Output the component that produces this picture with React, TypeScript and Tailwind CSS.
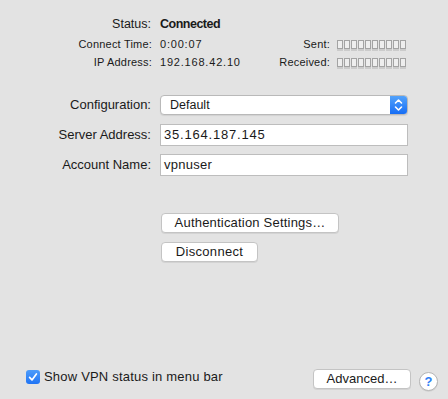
import React from "react";

function Tofu() {
  return (
    <div className="flex items-center gap-[1px] h-[18px]">
      {Array.from({ length: 10 }).map((_, i) => (
        <span
          key={i}
          className="block w-[6px] h-[9px] border border-[#a3a3a3] bg-[#eeeeee] shadow-[0_2px_0_#cbcbcb]"
        />
      ))}
    </div>
  );
}

export default function App() {
  return (
    <div className="w-[448px] h-[399px] bg-[#e3e3e3] flex flex-col text-[#1a1a1a] overflow-hidden font-['Liberation_Sans',Arial,sans-serif]">
      {/* Status section */}
      <div className="pt-[15px]">
        <div className="flex h-[18px] items-center text-[12.5px]">
          <div className="w-[151px] text-right">Status:</div>
          <div className="ml-[9px] font-bold tracking-[-0.5px]">Connected</div>
        </div>
        <div className="mt-[2px] flex">
          <div className="grid grid-cols-[152px_auto] gap-x-2 text-[11px] leading-[18px]">
            <div className="text-right tracking-[0.2px]">Connect Time:</div>
            <div className="tracking-[0.8px]">0:00:07</div>
            <div className="text-right tracking-[0.2px]">IP Address:</div>
            <div className="tracking-[0.8px]">192.168.42.10</div>
          </div>
          <div className="ml-auto mr-[42px] grid grid-cols-[auto_auto] gap-x-[7px] text-[11px] leading-[18px]">
            <div className="text-right tracking-[0.2px]">Sent:</div>
            <Tofu />
            <div className="text-right tracking-[0.2px]">Received:</div>
            <Tofu />
          </div>
        </div>
      </div>

      {/* Form */}
      <div className="mt-[24px] flex flex-col text-[13px]">
        <div className="flex items-center h-[20px]">
          <div className="w-[151px] text-right">Configuration:</div>
          <div className="ml-[9px] w-[248px] h-[20px] flex rounded-[4px] border border-[#b9b9b9] bg-white overflow-hidden shadow-[0_1px_1px_rgba(0,0,0,0.08)]">
            <div className="flex-1 pl-[9px] flex items-center text-[12.5px]">Default</div>
            <div className="w-[17px] h-full bg-gradient-to-b from-[#52a2fb] to-[#166df5] flex items-center justify-center">
              <svg width="17" height="20" viewBox="0 0 17 20">
                <path d="M5.5 8 L8.5 5 L11.5 8" fill="none" stroke="white" strokeWidth="1.6" strokeLinecap="round" strokeLinejoin="round" />
                <path d="M5.5 12 L8.5 15 L11.5 12" fill="none" stroke="white" strokeWidth="1.6" strokeLinecap="round" strokeLinejoin="round" />
              </svg>
            </div>
          </div>
        </div>
        <div className="mt-[9px] flex items-center h-[22px]">
          <div className="w-[151px] text-right">Server Address:</div>
          <div className="ml-[9px] w-[248px] h-[22px] border border-[#bdbdbd] bg-white pl-[3px] flex items-center text-[13px] tracking-[0.8px]">
            35.164.187.145
          </div>
        </div>
        <div className="mt-[8px] flex items-center h-[22px]">
          <div className="w-[151px] text-right">Account Name:</div>
          <div className="ml-[9px] w-[248px] h-[22px] border border-[#bdbdbd] bg-white pl-[3px] flex items-center text-[13px] tracking-[0.25px]">
            vpnuser
          </div>
        </div>
      </div>

      {/* Buttons */}
      <div className="mt-[37px] ml-[161px] flex flex-col gap-[9px] text-[13px]">
        <div className="w-[178px] h-[20px] rounded-[4px] border border-[#c4c4c4] bg-white shadow-[0_1px_0_rgba(0,0,0,0.07)] flex items-center justify-center tracking-[0.2px]">
          Authentication Settings…
        </div>
        <div className="w-[97px] h-[20px] rounded-[4px] border border-[#c4c4c4] bg-white shadow-[0_1px_0_rgba(0,0,0,0.07)] flex items-center justify-center tracking-[0.3px]">
          Disconnect
        </div>
      </div>

      {/* Bottom bar */}
      <div className="mt-auto mb-[10px] h-[20px] flex items-center pl-[26px] pr-[10px] text-[13px]">
        <div className="flex items-center gap-[4px] mb-[4px]">
          <div className="w-[14px] h-[14px] rounded-[3px] bg-gradient-to-b from-[#4d9cfa] to-[#1f74f5] flex items-center justify-center">
            <svg width="14" height="14" viewBox="0 0 14 14">
              <path d="M3.6 7.4 L6 9.9 L10.4 4" fill="none" stroke="white" strokeWidth="1.7" strokeLinecap="round" strokeLinejoin="round" />
            </svg>
          </div>
          <span className="tracking-[0.2px]">Show VPN status in menu bar</span>
        </div>
        <div className="ml-auto w-[98px] h-[20px] rounded-[4px] border border-[#c4c4c4] bg-white shadow-[0_1px_0_rgba(0,0,0,0.07)] flex items-center justify-center">
          Advanced…
        </div>
        <div className="ml-[8px] mt-[5px] w-[19px] h-[19px] rounded-full border border-[#b5b5b5] bg-white shadow-[0_1px_0_rgba(0,0,0,0.07)] flex items-center justify-center text-[#2f7ff5] text-[13px] font-bold leading-none">
          ?
        </div>
      </div>
    </div>
  );
}
